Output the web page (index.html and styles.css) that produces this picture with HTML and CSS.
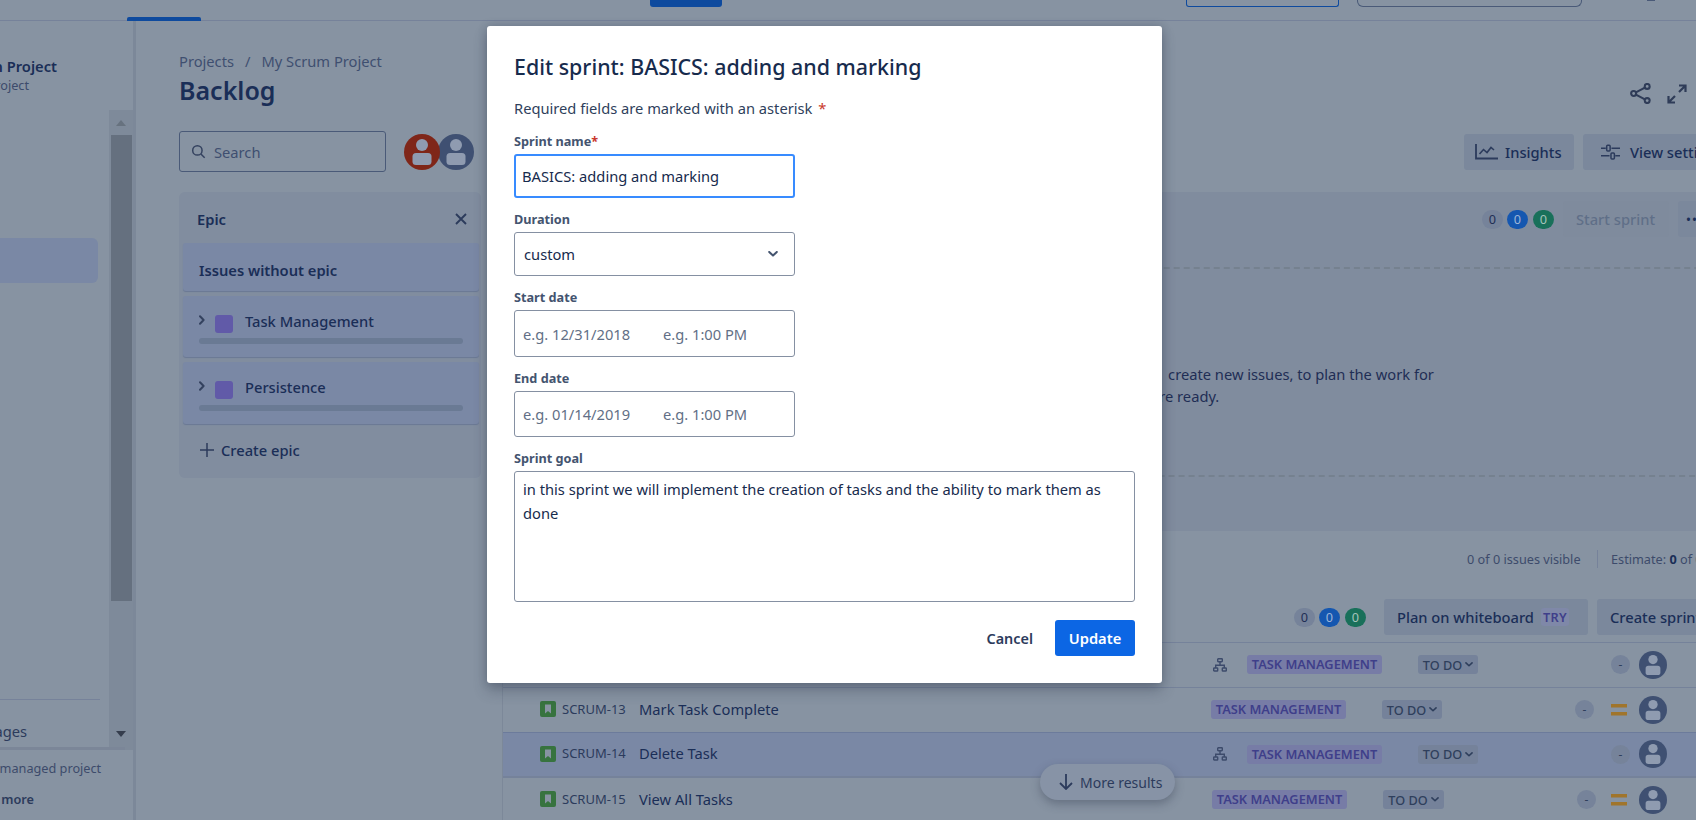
FILE: index.html
```html
<!DOCTYPE html>
<html lang="en">
<head>
    <meta charset="UTF-8">
    <meta name="viewport" content="width=device-width, initial-scale=1.0">
    <title>Backlog - Edit sprint</title>
    <link rel="stylesheet" href="styles.css">
</head>
<body>
    <svg class="sprites" aria-hidden="true">
        <symbol id="user" viewBox="0 0 36 36">
            <circle cx="18" cy="18" r="18" fill="currentColor"/>
            <circle cx="18" cy="11" r="6" fill="#8f9bb0"/>
            <rect x="8.500" y="19" width="19" height="12" rx="3.500" fill="#8f9bb0"/>
        </symbol>
        <symbol id="story" viewBox="0 0 16 16">
            <rect width="16" height="16" rx="2" fill="#37733f"/>
            <path d="M5 3.5h6v9l-3-2.4-3 2.4z" fill="#8793a2"/>
        </symbol>
        <symbol id="tree" viewBox="0 0 14 14">
            <g fill="none" stroke="#3d4b6b" stroke-width="1.4">
                <rect x="4.7" y=".7" width="4.6" height="3" rx=".6"/>
                <rect x=".7" y="10" width="4" height="3" rx=".6"/>
                <rect x="9.3" y="10" width="4" height="3" rx=".6"/>
                <path d="M7 4v3.2M2.7 10V7.2h8.6V10"/>
            </g>
        </symbol>
        <symbol id="chev" viewBox="0 0 10 6">
            <path d="M1.2 1l3.8 3.6L8.8 1" fill="none" stroke="currentColor" stroke-width="2" stroke-linecap="round" stroke-linejoin="round"/>
        </symbol>
        <symbol id="chev-r" viewBox="0 0 6 10">
            <path d="M1 1.2l3.6 3.8L1 8.8" fill="none" stroke="currentColor" stroke-width="2" stroke-linecap="round" stroke-linejoin="round"/>
        </symbol>
        <symbol id="medium" viewBox="0 0 16 12">
            <path d="M0 0h16v3.4H0zM0 8h16v3.4H0z" fill="#a0752c"/>
        </symbol>
    </svg>

    <div class="topnav">
        <span class="nav-tab"></span>
        <span class="nav-create"></span>
        <span class="nav-outline"></span>
        <span class="nav-search"></span>
        <span class="nav-dot"></span>
    </div>

    <div class="layout">
        <aside class="sidebar">
            <div class="project">
                <div class="project-name">My Scrum Project</div>
                <div class="project-type">Software project</div>
            </div>
            <div class="side-scroll">
                <nav class="side-list">
                    <div class="side-active"></div>
                    <div class="side-divider"></div>
                    <div class="side-link">Project pages</div>
                </nav>
                <div class="scrollbar">
                    <span class="arrow-up"></span>
                    <span class="thumb"></span>
                    <span class="arrow-down"></span>
                </div>
            </div>
            <div class="side-foot">
                <div class="side-note">You're in a team-managed project</div>
                <div class="side-more">Learn more</div>
            </div>
        </aside>

        <main class="content">
            <div class="page-head">
                <div>
                    <div class="crumbs"><span>Projects</span><span class="crumb-sep">/</span><span>My Scrum Project</span></div>
                    <h1 class="page-title">Backlog</h1>
                </div>
                <div class="head-icons">
                    <svg class="icon-share" viewBox="0 0 22 22" fill="none" stroke="#2f3c58" stroke-width="2.2">
                        <circle cx="3.8" cy="11" r="2.6"/>
                        <circle cx="18" cy="3.6" r="2.6"/>
                        <circle cx="18" cy="18.4" r="2.6"/>
                        <path d="M6.2 9.8l9.4-5M6.2 12.2l9.4 5"/>
                    </svg>
                    <svg class="icon-expand" viewBox="0 0 20 20" fill="none" stroke="#2f3c58" stroke-width="2.2">
                        <path d="M12 1.5h6.5V8M18 2l-6 6M8 18.5H1.5V12M2 18l6-6"/>
                    </svg>
                </div>
            </div>

            <div class="toolbar">
                <div class="search">
                    <svg class="icon-search" viewBox="0 0 16 16" fill="none" stroke="#34425f" stroke-width="1.6">
                        <circle cx="6.8" cy="6.8" r="5"/>
                        <path d="M10.6 10.6l4 4"/>
                    </svg>
                    <span>Search</span>
                </div>
                <div class="avatars">
                    <svg class="avatar avatar-red"><use href="#user"/></svg>
                    <svg class="avatar avatar-blue"><use href="#user"/></svg>
                </div>
                <div class="tool-buttons">
                    <button class="btn btn-insights" type="button">
                        <svg class="icon-insights" viewBox="0 0 23 16" fill="none" stroke="#2c3b5c" stroke-width="1.8">
                            <path d="M1 0v14.5h22"/>
                            <path d="M4.500 10l4-4.500 3.500 3 4-5 3 2.500" stroke-width="1.6"/>
                        </svg>
                        Insights
                    </button>
                    <button class="btn btn-view" type="button">
                        <svg class="icon-sliders" viewBox="0 0 20 16" fill="none" stroke="#2c3b5c" stroke-width="1.6">
                            <path d="M0 4h5M11 4h9M0 12h9M15 12h5"/>
                            <rect x="6" y="1" width="3.600" height="6" rx="1"/>
                            <rect x="10.500" y="9" width="3.600" height="6.400" rx="1"/>
                        </svg>
                        View settings
                    </button>
                </div>
            </div>

            <div class="board">
                <section class="epics">
                    <div class="epics-head">
                        <span>Epic</span>
                        <svg class="icon-close" viewBox="0 0 12 12" stroke="#2c3b5c" stroke-width="1.9">
                            <path d="M1 1l10 10M11 1L1 11"/>
                        </svg>
                    </div>
                    <div class="epic-card epic-none">Issues without epic</div>
                    <div class="epic-card epic-item">
                        <div class="epic-line">
                            <svg class="epic-chev"><use href="#chev-r"/></svg>
                            <span class="epic-swatch"></span>
                            <span>Task Management</span>
                        </div>
                        <div class="epic-bar"></div>
                    </div>
                    <div class="epic-card epic-item epic-item-last">
                        <div class="epic-line">
                            <svg class="epic-chev"><use href="#chev-r"/></svg>
                            <span class="epic-swatch"></span>
                            <span>Persistence</span>
                        </div>
                        <div class="epic-bar"></div>
                    </div>
                    <div class="epic-create">
                        <svg class="icon-plus" viewBox="0 0 14 14" stroke="#2c3b5c" stroke-width="1.500">
                            <path d="M7 0v14M0 7h14"/>
                        </svg>
                        Create epic
                    </div>
                </section>

                <section class="issues">
                    <div class="sprint">
                        <div class="sprint-head">
                            <div class="counts">
                                <span class="count">0</span>
                                <span class="count count-blue">0</span>
                                <span class="count count-green">0</span>
                            </div>
                            <button class="btn btn-disabled" type="button">Start sprint</button>
                            <button class="btn btn-more" type="button"><span class="more-dots">&bull;&bull;&bull;</span></button>
                        </div>
                        <div class="dropzone">
                            <p>Drag issues from the Backlog section, or&ensp;create new issues, to plan the work for<br>this sprint. Select Start sprint&ensp;when you're ready.</p>
                        </div>
                    </div>

                    <div class="backlog">
                        <div class="stats">
                            <span class="stats-count">0 of 0 issues visible</span>
                            <span class="stats-sep"></span>
                            <span>Estimate: <b>0</b> of 0</span>
                        </div>
                        <div class="backlog-head">
                            <div class="counts">
                                <span class="count">0</span>
                                <span class="count count-blue">0</span>
                                <span class="count count-green">0</span>
                            </div>
                            <button class="btn btn-plan" type="button">Plan on whiteboard <span class="try">TRY</span></button>
                            <button class="btn btn-create" type="button">Create sprint</button>
                        </div>

                        <div class="row">
                            <svg class="story"><use href="#story"/></svg>
                            <span class="key">SCRUM-12</span>
                            <span class="summary">Add New Task</span>
                            <svg class="tree"><use href="#tree"/></svg>
                            <span class="epic-tag">TASK MANAGEMENT</span>
                            <span class="status">TO DO <svg class="status-chev"><use href="#chev"/></svg></span>
                            <span class="points">-</span>
                            <svg class="row-avatar"><use href="#user"/></svg>
                        </div>
                        <div class="row">
                            <svg class="story"><use href="#story"/></svg>
                            <span class="key">SCRUM-13</span>
                            <span class="summary">Mark Task Complete</span>
                            <span class="epic-tag">TASK MANAGEMENT</span>
                            <span class="status">TO DO <svg class="status-chev"><use href="#chev"/></svg></span>
                            <span class="points">-</span>
                            <svg class="priority"><use href="#medium"/></svg>
                            <svg class="row-avatar"><use href="#user"/></svg>
                        </div>
                        <div class="row row-active">
                            <svg class="story"><use href="#story"/></svg>
                            <span class="key">SCRUM-14</span>
                            <span class="summary">Delete Task</span>
                            <svg class="tree"><use href="#tree"/></svg>
                            <span class="epic-tag">TASK MANAGEMENT</span>
                            <span class="status">TO DO <svg class="status-chev"><use href="#chev"/></svg></span>
                            <span class="points">-</span>
                            <svg class="row-avatar"><use href="#user"/></svg>
                        </div>
                        <div class="row row-wide">
                            <svg class="story"><use href="#story"/></svg>
                            <span class="key">SCRUM-15</span>
                            <span class="summary">View All Tasks</span>
                            <span class="epic-tag">TASK MANAGEMENT</span>
                            <span class="status">TO DO <svg class="status-chev"><use href="#chev"/></svg></span>
                            <span class="points">-</span>
                            <svg class="priority"><use href="#medium"/></svg>
                            <svg class="row-avatar"><use href="#user"/></svg>
                        </div>
                    </div>
                </section>
            </div>
        </main>
    </div>

    <div class="more-results">
        <svg class="icon-down" viewBox="0 0 14 16" fill="none" stroke="#2c3b5c" stroke-width="1.800">
            <path d="M7 0v15M1 9l6 6 6-6"/>
        </svg>
        More results
    </div>

    <form class="modal">
        <h2 class="modal-title">Edit sprint: BASICS: adding and marking</h2>
        <p class="required-note">Required fields are marked with an asterisk <span class="star star-note">*</span></p>

        <div class="field field-first">
            <label for="sprintName">Sprint name<span class="star">*</span></label>
            <input class="control control-focus" id="sprintName" type="text" value="BASICS: adding and marking">
        </div>
        <div class="field">
            <label>Duration</label>
            <div class="control control-select">
                <span>custom</span>
                <svg class="select-chev"><use href="#chev"/></svg>
            </div>
        </div>
        <div class="field">
            <label>Start date</label>
            <div class="control control-date control-date-tall">
                <input class="date-part" type="text" placeholder="e.g. 12/31/2018">
                <input class="time-part" type="text" placeholder="e.g. 1:00 PM">
            </div>
        </div>
        <div class="field">
            <label>End date</label>
            <div class="control control-date">
                <input class="date-part" type="text" placeholder="e.g. 01/14/2019">
                <input class="time-part" type="text" placeholder="e.g. 1:00 PM">
            </div>
        </div>
        <div class="field">
            <label for="sprintGoal">Sprint goal</label>
            <textarea class="control control-area" id="sprintGoal">in this sprint we will implement the creation of tasks and the ability to mark them as done</textarea>
        </div>

        <div class="modal-foot">
            <button class="btn-cancel" type="button">Cancel</button>
            <button class="btn-update" type="button">Update</button>
        </div>
    </form>
</body>
</html>
```

FILE: styles.css
```css
* {
    box-sizing: border-box;
}

body {
    margin: 0;
    width: 1696px;
    height: 820px;
    overflow: hidden;
    background: #8793a2;
    color: #1a2e57;
    font-family: "Noto Sans", "Open Sans", sans-serif;
    font-size: 14.7px;
}

.sprites {
    display: none;
}

button {
    font-family: inherit;
}

/* top bar, mostly scrolled away */
.topnav {
    display: flex;
    height: 21px;
    border-bottom: 1px solid #76829a;
}

.nav-tab {
    align-self: flex-end;
    width: 74px;
    height: 4px;
    margin-left: 127px;
    margin-bottom: -1px;
    background: #0e4a9e;
    border-radius: 2px 2px 0 0;
}

.nav-create {
    width: 72px;
    height: 7px;
    margin-left: 449px;
    background: #0e4a9e;
    border-radius: 0 0 3px 3px;
}

.nav-outline {
    width: 153px;
    height: 7px;
    margin-left: 464px;
    border: 1px solid #0e4a9e;
    border-top: 0;
    border-radius: 0 0 3px 3px;
}

.nav-search {
    width: 225px;
    height: 7px;
    margin-left: 18px;
    border: 1px solid #4a5a78;
    border-top: 0;
    border-radius: 0 0 6px 6px;
}

.nav-dot {
    width: 8px;
    height: 1px;
    margin-left: 65px;
    background: #4a5a78;
}

.layout {
    display: flex;
    height: 799px;
}

/* sidebar, pushed off the left edge */
.sidebar {
    flex: none;
    width: 136px;
    display: flex;
    flex-direction: column;
    border-right: 3px solid #7c8899;
}

.project {
    height: 89px;
    padding-top: 35px;
    margin-left: -100px;
    width: 157px;
    text-align: right;
    white-space: nowrap;
}

.project-name {
    font-weight: 600;
    line-height: 21px;
}

.project-type {
    margin-right: 28px;
    font-size: 12.7px;
    line-height: 16px;
    color: #3d4b6b;
}

.side-scroll {
    position: relative;
    display: flex;
    height: 640px;
}

.side-scroll::after {
    content: "";
    position: absolute;
    left: 0;
    bottom: 0;
    width: 125px;
    height: 3px;
    background: #7b8698;
}

.side-list {
    width: 109px;
    padding-top: 128px;
}

.side-active {
    width: 98px;
    height: 45px;
    background: #7a88a5;
    border-radius: 0 6px 6px 0;
}

.side-divider {
    width: 100px;
    height: 1px;
    margin-top: 416px;
    background: #76829a;
}

.side-link {
    width: 127px;
    margin-left: -100px;
    margin-top: 21px;
    line-height: 20px;
    text-align: right;
    white-space: nowrap;
    color: #2c3b5c;
}

.scrollbar {
    flex: none;
    width: 24px;
    background: #7e8a9a;
    display: flex;
    flex-direction: column;
    align-items: center;
}

.arrow-up {
    width: 0;
    height: 0;
    margin-top: 10px;
    margin-bottom: 9px;
    border: 5.5px solid transparent;
    border-top: 0;
    border-bottom: 6px solid #67727f;
}

.thumb {
    width: 21px;
    height: 466px;
    background: #65707f;
}

.arrow-down {
    width: 0;
    height: 0;
    margin-top: 130px;
    border: 5.5px solid transparent;
    border-bottom: 0;
    border-top: 6px solid #353d4d;
}

.side-foot {
    margin-left: -100px;
    width: 200px;
    text-align: right;
    white-space: nowrap;
}

.side-note {
    margin-top: 10px;
    font-size: 12.7px;
    line-height: 16px;
    color: #3d4b6b;
}

.side-more {
    margin-top: 15px;
    margin-right: 66px;
    font-size: 12.7px;
    font-weight: 600;
    line-height: 16px;
    color: #2c3b5c;
}

/* main column runs past the right edge */
.content {
    flex: none;
    width: 1600px;
}

.page-head {
    display: flex;
    justify-content: space-between;
    align-items: flex-end;
    padding: 30px 49px 0 43px;
}

.crumbs {
    display: flex;
    line-height: 20px;
    color: #3f4f70;
}

.crumb-sep {
    margin: 0 11px;
}

.page-title {
    margin: 0;
    font-size: 25px;
    font-weight: 600;
    line-height: 38px;
    color: #1a2e57;
}

.head-icons {
    display: flex;
    align-items: center;
    gap: 16px;
    padding-bottom: 5px;
}

.icon-share {
    width: 21px;
    height: 21px;
}

.icon-expand {
    width: 20px;
    height: 20px;
}

.toolbar {
    display: flex;
    align-items: center;
    height: 41px;
    margin-top: 22px;
    padding: 0 6px 0 43px;
}

.search {
    display: flex;
    align-items: center;
    width: 207px;
    height: 41px;
    padding-left: 11px;
    border: 1px solid #4a5a78;
    border-radius: 3px;
    color: #3f4f70;
}

.icon-search {
    width: 15px;
    height: 15px;
    margin-right: 8px;
}

.avatars {
    display: flex;
    margin-left: 18px;
}

.avatar {
    width: 36px;
    height: 36px;
}

.avatar-red {
    color: #7f2619;
    position: relative;
    z-index: 1;
}

.avatar-blue {
    color: #3f5072;
    margin-left: -2px;
}

.tool-buttons {
    display: flex;
    gap: 9px;
    margin-left: auto;
}

.btn {
    display: flex;
    align-items: center;
    height: 36px;
    padding: 0 13px;
    border: 0;
    border-radius: 3px;
    background: #7b889c;
    color: #1a2e57;
    font-size: 14.7px;
    font-weight: 500;
    white-space: nowrap;
}

.btn svg {
    flex: none;
}

.btn-insights {
    width: 110px;
    padding-left: 11px;
}

.btn-view {
    width: 147px;
    padding-left: 18px;
}

.icon-insights {
    width: 23px;
    height: 16px;
    margin-right: 7px;
}

.icon-sliders {
    width: 19px;
    height: 16px;
    margin-right: 10px;
}

.board {
    display: flex;
    gap: 21px;
    margin-top: 20px;
    margin-left: 43px;
}

.epics {
    flex: none;
    width: 302px;
    height: 286px;
    padding: 0 2px 0 4px;
    background: #818d9f;
    border-radius: 6px;
    font-weight: 600;
}

.epics-head {
    display: flex;
    justify-content: space-between;
    align-items: center;
    height: 51px;
    padding: 2px 12px 0 14px;
}

.icon-close {
    width: 12px;
    height: 12px;
}

.epic-card {
    background: #7a88a5;
    border-radius: 3px;
    box-shadow: 0 1px 1px #6a7894;
}

.epic-none {
    height: 48px;
    padding: 17px 0 0 16px;
    line-height: 20px;
}

.epic-item {
    height: 61px;
    margin-top: 5px;
    padding: 15px 16px 0;
}

.epic-item-last {
    height: 62px;
}

.epic-item-last .epic-bar {
    margin-top: 8px;
}

.epic-line {
    display: flex;
    align-items: center;
    height: 20px;
    font-weight: 500;
}

.epic-chev {
    width: 6px;
    height: 10px;
    margin-right: 10px;
    margin-top: -3px;
    color: #34425f;
}

.epic-swatch {
    width: 18px;
    height: 18px;
    margin-top: 5px;
    margin-right: 12px;
    background: #615aa8;
    border-radius: 3px;
}

.epic-bar {
    height: 6px;
    margin-top: 7px;
    background: #6a7a94;
    border-radius: 3px;
}

.epic-create {
    display: flex;
    align-items: center;
    gap: 7px;
    height: 52px;
    padding-left: 17px;
    font-weight: 500;
}

.icon-plus {
    width: 14px;
    height: 14px;
}

.issues {
    flex: none;
    width: 1234px;
}

.sprint {
    height: 339px;
    padding: 9px 0 0 8px;
    background: #808c9e;
    border-radius: 6px 0 0 0;
}

.sprint-head {
    display: flex;
    align-items: center;
    height: 36px;
}

.counts {
    display: flex;
    gap: 4px;
    margin-left: auto;
}

.count {
    width: 21px;
    height: 19px;
    border-radius: 10px;
    background: #76839a;
    color: #1f2e55;
    font-size: 12.7px;
    line-height: 19px;
    text-align: center;
}

.count-blue {
    background: #1557b0;
    color: #9db5d8;
}

.count-green {
    background: #19705a;
    color: #a5c4bb;
    margin-left: 1px;
}

.btn-disabled {
    width: 106px;
    margin-left: 9px;
    background: #7f8b9d;
    color: #5f6f88;
}

.btn-more {
    width: 58px;
    margin-left: 9px;
    padding: 0 0 0 8px;
    justify-content: flex-start;
    overflow: hidden;
}

.more-dots {
    font-size: 13px;
    letter-spacing: 1px;
}

.dropzone {
    height: 210px;
    margin-top: 30px;
    margin-right: 8px;
    border: 2px dashed #75818f;
    border-radius: 3px;
}

.dropzone p {
    margin: 94px 0 0 371px;
    line-height: 22px;
    color: #1f2e55;
    white-space: nowrap;
}

.backlog {
    border-left: 1px solid #7c8899;
}

.stats {
    display: flex;
    align-items: center;
    height: 55px;
    padding-left: 964px;
    font-size: 12.7px;
    white-space: nowrap;
    color: #3d4b6b;
}

.stats-count {
    width: 114px;
}

.stats-sep {
    flex: none;
    width: 1px;
    height: 18px;
    margin: 0 13px 0 16px;
    background: #76829a;
}

.stats b {
    color: #1a2e57;
}

.backlog-head {
    display: flex;
    align-items: center;
    height: 56px;
    padding: 13px 9px 7px 0;
}

.btn-plan {
    width: 204px;
    margin-left: 18px;
    margin-right: 9px;
}

.btn-create {
    width: 130px;
}

.try {
    margin-left: 7px;
    padding: 0 2px;
    font-size: 12.7px;
    font-weight: 600;
    background: #7f88a8;
    border-radius: 3px;
    color: #3f3f8a;
    letter-spacing: .3px;
}

.row {
    display: flex;
    align-items: center;
    height: 45px;
    padding: 0 69px 1px 37px;
    border-top: 1px solid #75829a;
}

.row-active {
    background: #7a88a5;
    border-top-color: #6c7b9b;
    border-bottom: 1px solid #75829a;
}

.story {
    flex: none;
    width: 16px;
    height: 16px;
    margin-bottom: 1px;
}

.key {
    flex: none;
    width: 64px;
    margin-left: 6px;
    margin-bottom: 2px;
    font-size: 13px;
    white-space: nowrap;
    color: #2c3b5c;
}

.summary {
    margin-left: 13px;
    margin-right: auto;
    margin-bottom: 2px;
}

.tree {
    width: 14px;
    height: 14px;
    margin-right: 20px;
}

.epic-tag {
    width: 135px;
    height: 19px;
    background: #777ca6;
    border-radius: 3px;
    color: #3f3f8a;
    font-size: 12.8px;
    font-weight: 600;
    line-height: 19px;
    text-align: center;
}

.status {
    display: flex;
    align-items: center;
    justify-content: center;
    gap: 3px;
    width: 60px;
    height: 19px;
    margin-left: 36px;
    margin-right: 133px;
    background: #75829a;
    border-radius: 3px;
    color: #2f3f5c;
    font-size: 12.7px;
    font-weight: 500;
}

.status-chev {
    width: 8px;
    height: 5px;
}

.points {
    width: 19px;
    height: 19px;
    margin-right: 9px;
    background: #76839a;
    border-radius: 50%;
    color: #2f3f5c;
    font-size: 12px;
    line-height: 19px;
    text-align: center;
}

.priority {
    width: 16px;
    height: 12px;
    margin-left: 8px;
    margin-right: 12px;
}

.row-wide .status {
    width: 61px;
}

.row-wide .priority {
    margin-left: 6px;
}

.row-avatar {
    flex: none;
    width: 28px;
    height: 28px;
    color: #3f5072;
}

.more-results {
    position: absolute;
    left: 1040px;
    top: 764px;
    display: flex;
    align-items: center;
    gap: 7px;
    width: 135px;
    height: 36px;
    padding-left: 19px;
    background: #8793a6;
    border-radius: 18px;
    box-shadow: 0 4px 10px rgba(40, 50, 70, .35);
    color: #2c3b5c;
    font-size: 14px;
}

.icon-down {
    width: 14px;
    height: 16px;
}

/* dialog */
.modal {
    position: absolute;
    left: 487px;
    top: 26px;
    width: 675px;
    height: 657px;
    padding: 25px 27px 0;
    background: #fff;
    border-radius: 3px;
    box-shadow: 0 8px 14px rgba(40, 50, 70, .3), 0 0 8px rgba(40, 50, 70, .25);
    color: #172b4d;
}

.modal-title {
    margin: 0;
    font-size: 21.4px;
    font-weight: 500;
    line-height: 32px;
}

.required-note {
    margin: 15px 0 0;
    line-height: 20px;
    color: #2f3f5c;
}

.star {
    color: #c9372c;
}

.star-note {
    margin-left: 2px;
}

.field {
    margin-top: 13px;
}

.field-first {
    margin-top: 15px;
}

.field label {
    display: block;
    margin-bottom: 4px;
    font-size: 12.7px;
    font-weight: 700;
    line-height: 17px;
    color: #44546f;
}

.control {
    display: block;
    width: 281px;
    height: 44px;
    border: 1px solid #8590a2;
    border-radius: 3px;
    background: #fff;
    color: #172b4d;
    font-family: inherit;
    font-size: 14.7px;
}

.control-focus {
    padding: 0 6px;
    border: 2px solid #388bff;
    outline: 0;
}

.control-select {
    display: flex;
    align-items: center;
    justify-content: space-between;
    padding: 0 16px 0 9px;
}

.select-chev {
    width: 10px;
    height: 6px;
    color: #44546f;
}

.control-date {
    display: flex;
    align-items: center;
    height: 46px;
    padding-left: 8px;
}

.control-date-tall {
    height: 47px;
}

.control-date input {
    padding: 0;
    border: 0;
    outline: 0;
    background: none;
    font-family: inherit;
    font-size: 14.7px;
}

.control-date input::placeholder {
    color: #626f86;
    opacity: 1;
}

.date-part {
    width: 140px;
}

.time-part {
    width: 120px;
}

.control-area {
    width: 621px;
    height: 131px;
    padding: 5px 8px;
    line-height: 24px;
    outline: 0;
    resize: none;
}

.modal-foot {
    display: flex;
    justify-content: flex-end;
    align-items: center;
    margin-top: 18px;
}

.btn-cancel,
.btn-update {
    height: 36px;
    border: 0;
    border-radius: 3px;
    font-weight: 600;
}

.btn-cancel {
    margin-right: 8px;
    padding: 0 14px;
    background: none;
    color: #2c3b5c;
    font-size: 14.4px;
}

.btn-update {
    width: 80px;
    background: #0c66e4;
    color: #fff;
    font-size: 14.7px;
}
```
